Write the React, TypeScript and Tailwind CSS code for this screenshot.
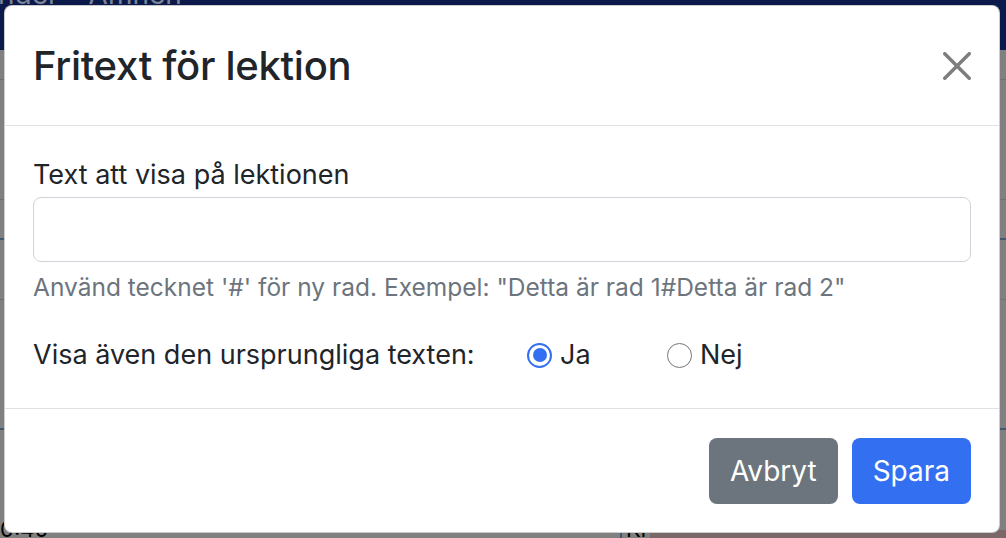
import { useState } from "react";

const font = { fontFamily: 'Inter, "Liberation Sans", Arial, sans-serif' };

function Radio({ checked, onClick }: { checked: boolean; onClick: () => void }) {
  return (
    <button
      type="button"
      onClick={onClick}
      className={`flex h-[25px] w-[25px] shrink-0 items-center justify-center rounded-full bg-white ${
        checked ? "border-[2.5px] border-[#3370f1]" : "border-[1.5px] border-[#767676]"
      }`}
    >
      {checked && <span className="h-[14px] w-[14px] rounded-full bg-[#3370f1]" />}
    </button>
  );
}

export default function App() {
  const [text, setText] = useState("");
  const [showOriginal, setShowOriginal] = useState(true);

  return (
    <div className="relative h-[538px] w-full overflow-hidden bg-[#808080]" style={font}>
      {/* dimmed page behind the modal */}
      <div className="flex h-[50px] items-start gap-[30px] bg-[#0b1a4b] text-[28px] leading-none text-[#7d8597]">
        <span className="-ml-[2px] -mt-[20px]">nder</span>
        <span className="-mt-[20px]">Ämnen</span>
      </div>
      <div className="flex flex-col">
        <div className="h-[30px] border-b border-[#707070]" />
        <div className="h-[120px] border-b border-[#707070]" />
        <div className="h-[40px] border-b-2 border-[#40576c]" />
        <div className="h-[60px] border-b border-[#707070]" />
        <div className="h-[130px] border-b-2 border-[#40576c]" />
        <div className="h-[100px]" />
        <div className="flex h-[10px] items-end text-[22px] leading-none text-black">
          <span className="w-[620px]">0:40</span>
          <span className="w-[30px] border-l-2 border-[#40576c] pl-1">Kl</span>
          <span className="h-full flex-1 bg-[#7a6767]" />
        </div>
      </div>

      {/* modal */}
      <div className="absolute left-[4px] top-[5px] w-[996px] rounded-[8px] border border-black/20 bg-white text-[#212529]">
        <div className="flex items-center justify-between border-b border-[#dee2e6] p-[28px]">
          <h1 className="text-[40px] font-medium leading-[63px] tracking-[-0.3px]">Fritext för lektion</h1>
          <button type="button" className="flex h-[28px] w-[28px] items-center justify-center opacity-50">
            <svg viewBox="0 0 16 16" className="h-[28px] w-[28px]" fill="#000">
              <path d="M.293.293a1 1 0 0 1 1.414 0L8 6.586 14.293.293a1 1 0 1 1 1.414 1.414L9.414 8l6.293 6.293a1 1 0 0 1-1.414 1.414L8 9.414l-6.293 6.293a1 1 0 0 1-1.414-1.414L6.586 8 .293 1.707a1 1 0 0 1 0-1.414z" />
            </svg>
          </button>
        </div>

        <div className="flex flex-col px-[28px] pb-[32px] pt-[28px] text-[27px]">
          <label className="leading-[42px]">Text att visa på lektionen</label>
          <input
            value={text}
            onChange={(e) => setText(e.target.value)}
            className="mt-[1px] h-[65px] w-full rounded-[8px] border border-[#ced4da] px-[21px] text-[27px] outline-none"
          />
          <div className="mt-[7px] text-[24.5px] leading-[37px] text-[#6c757d]">
            Använd tecknet '#' för ny rad. Exempel: "Detta är rad 1#Detta är rad 2"
          </div>
          <div className="mt-[28px] flex items-center leading-[42px]">
            <span className="w-[494px]">Visa även den ursprungliga texten:</span>
            <div className="flex w-[140px] items-center gap-[8px]">
              <Radio checked={showOriginal} onClick={() => setShowOriginal(true)} />
              <span>Ja</span>
            </div>
            <div className="flex items-center gap-[8px]">
              <Radio checked={!showOriginal} onClick={() => setShowOriginal(false)} />
              <span>Nej</span>
            </div>
          </div>
        </div>

        <div className="flex justify-end gap-[14px] border-t border-[#dee2e6] px-[28px] pb-[28px] pt-[29px]">
          <button type="button" className="h-[66px] rounded-[8px] bg-[#6c757d] px-[21px] text-[28px] text-white">
            Avbryt
          </button>
          <button type="button" className="h-[66px] rounded-[8px] bg-[#3370f1] px-[21px] text-[28px] text-white">
            Spara
          </button>
        </div>
      </div>
    </div>
  );
}
